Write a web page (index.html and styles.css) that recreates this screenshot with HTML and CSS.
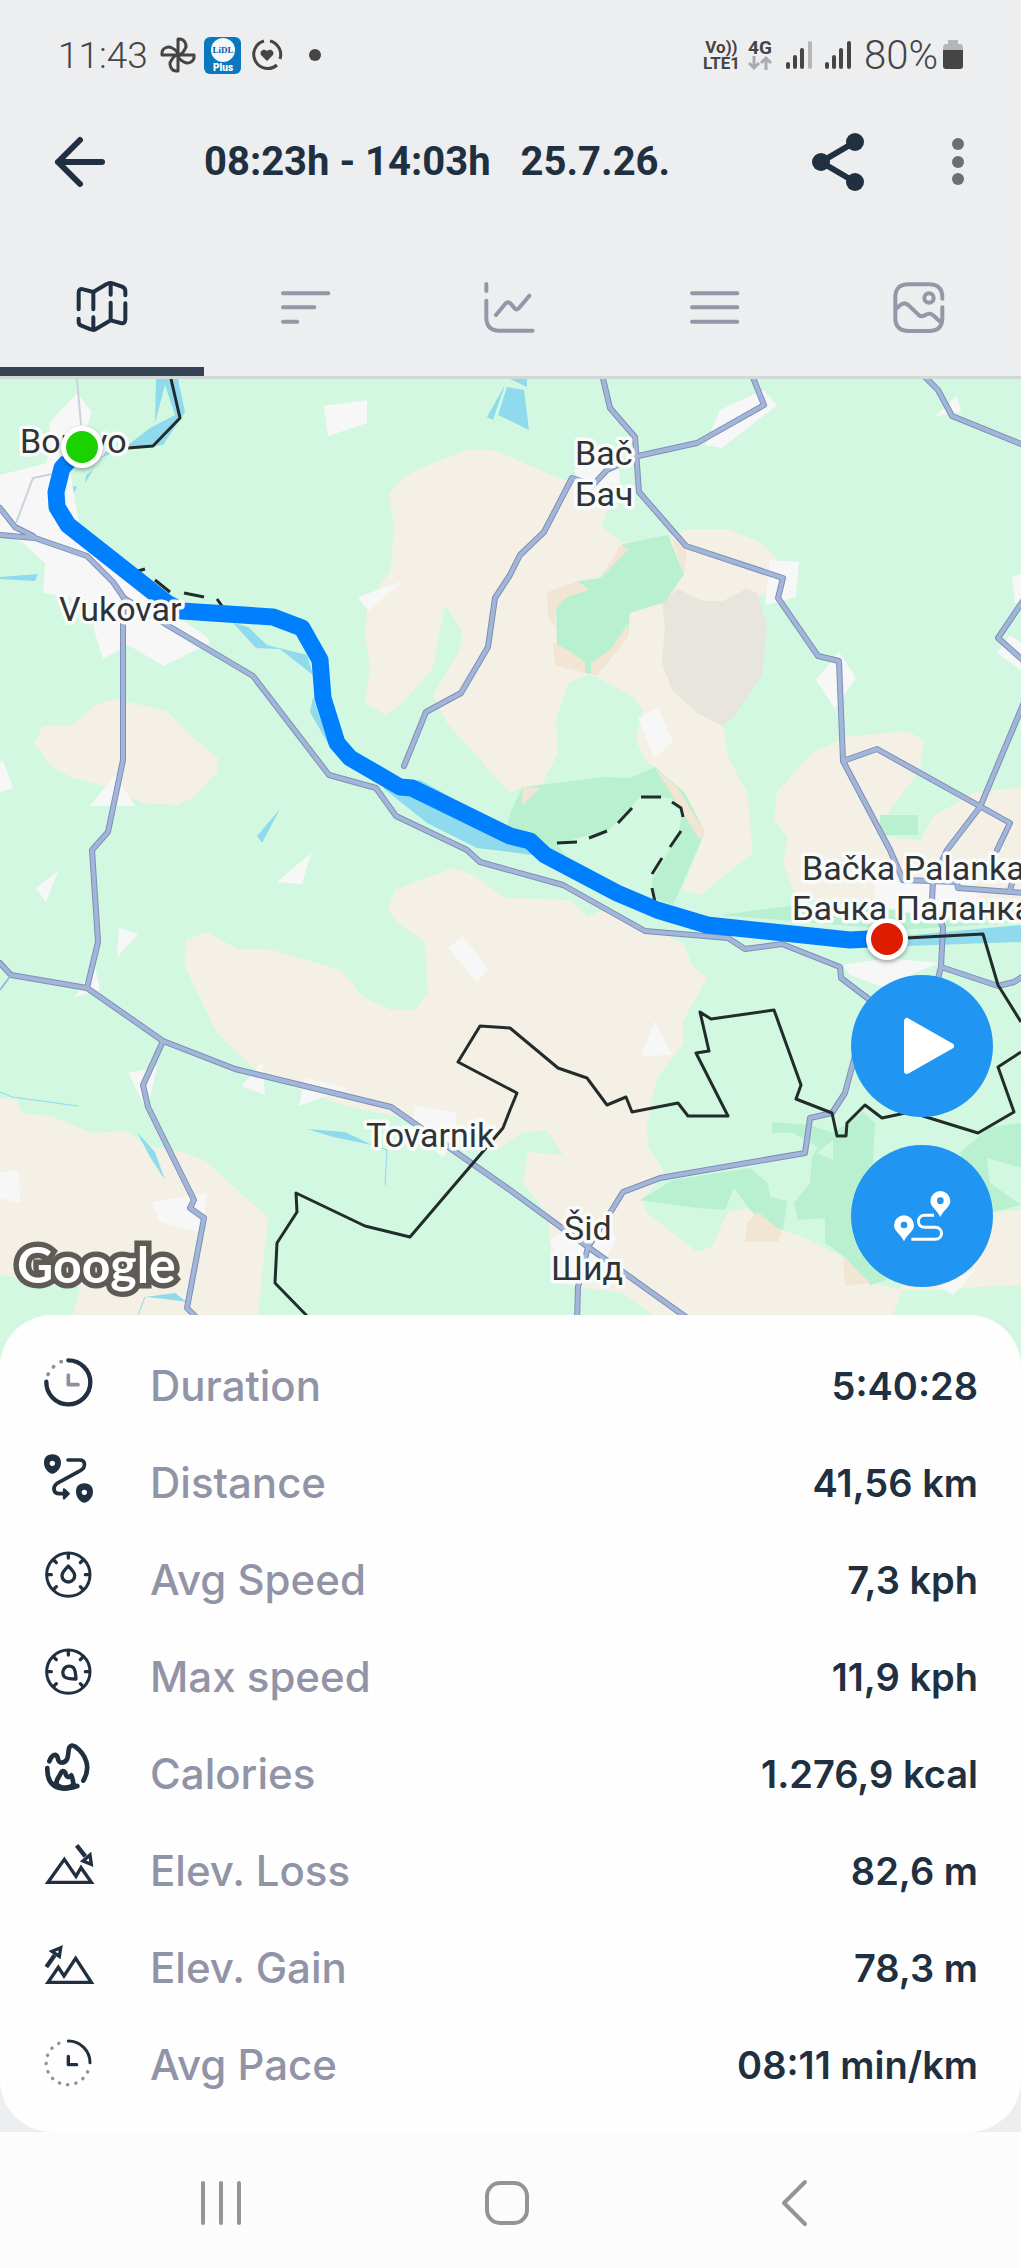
FILE: index.html
```html
<!DOCTYPE html>
<html lang="en">
    <head>
        <meta charset="utf-8">
        <meta name="viewport" content="width=device-width, initial-scale=1">
        <title>Track details</title>
        <link rel="stylesheet" href="styles.css">
    </head>
    <body>
        <header>
            <div class="status">
                <span class="clock">11:43</span>
                <svg class="fan" width="36" height="36" viewBox="0 0 36 36">
                    <g fill="none" stroke="#454545" stroke-width="3" stroke-linejoin="round">
                        <path d="M18 18V2C26 1 27 10 25 12C23 16 20 18 18 18Z"/>
                        <path d="M18 18H34C35 26 27 27 24 25C20 23 18 20 18 18Z"/>
                        <path d="M18 18V34C10 35 9 26 11 24C13 20 16 18 18 18Z"/>
                        <path d="M18 18H2C1 10 9 9 12 11C16 13 18 16 18 18Z"/>
                    </g>
                </svg>
                <svg width="37" height="37" viewBox="0 0 37 37">
                    <rect width="37" height="37" rx="6" fill="#0a78bf"/>
                    <circle cx="19" cy="13" r="12" fill="#f4f8fa"/>
                    <text class="lidl" x="19" y="16" fill="#0a5c9c">LiDL</text>
                    <text class="plus" x="19" y="34" fill="#fff">Plus</text>
                </svg>
                <svg class="ring" width="32" height="32" viewBox="0 0 32 32">
                    <g fill="none" stroke="#454545" stroke-width="3">
                        <path d="M13 2A14 14 0 1 0 26 26"/>
                        <path d="M19 2A14 14 0 0 1 29 20"/>
                    </g>
                    <path d="M16 22L10 16C8 12 13 9 16 12C19 9 24 12 22 16Z" fill="#454545"/>
                </svg>
                <span class="dot"></span>
                <span class="space"></span>
                <span class="lte"><b>Vo))</b><b>LTE1</b></span>
                <span class="net">
                    <b>4G</b>
                    <svg width="24" height="14" viewBox="0 0 24 14" fill="none" stroke="#a9abac" stroke-width="3">
                        <path d="M6 0V12M1 7L6 12L11 7M18 14V2M13 7L18 2L23 7"/>
                    </svg>
                </span>
                <svg class="signal" width="26" height="28" viewBox="0 0 26 28" stroke="#454545" stroke-width="4" stroke-linecap="round">
                    <path d="M2 23V26M9 16V26M16 9V26"/>
                    <path d="M24 2V26" stroke="#b4b6b7"/>
                </svg>
                <svg class="signal" width="26" height="28" viewBox="0 0 26 28" stroke="#454545" stroke-width="4" stroke-linecap="round">
                    <path d="M2 23V26M9 16V26M16 9V26M24 2V26"/>
                </svg>
                <span class="battery">80%</span>
                <svg width="20" height="30" viewBox="0 0 20 30">
                    <path d="M5 0H15V4H17Q20 4 20 8V12H0V8Q0 4 3 4H5Z" fill="#b4b6b7"/>
                    <path d="M0 10H20V26Q20 29 17 29H3Q0 29 0 26Z" fill="#454545"/>
                </svg>
            </div>

            <div class="titleBar">
                <button class="iconButton" aria-label="Back">
                    <svg width="52" height="52" viewBox="0 0 52 52" fill="none" stroke="#203040" stroke-width="6" stroke-linecap="round" stroke-linejoin="round">
                        <path d="M26 4L4 26L26 48M4 26H48"/>
                    </svg>
                </button>
                <h1><span>08:23h - 14:03h</span><span>25.7.26.</span></h1>
                <button class="iconButton" aria-label="Share">
                    <svg width="52" height="58" viewBox="0 0 52 58" fill="#203040">
                        <path d="M43 9L9 29L43 49" fill="none" stroke="#203040" stroke-width="6"/>
                        <circle cx="43" cy="9" r="9"/>
                        <circle cx="9" cy="29" r="9"/>
                        <circle cx="43" cy="49" r="9"/>
                    </svg>
                </button>
                <button class="iconButton more" aria-label="More">
                    <svg width="12" height="48" viewBox="0 0 12 48" fill="#6d6e70">
                        <circle cx="6" cy="6" r="6"/>
                        <circle cx="6" cy="24" r="6"/>
                        <circle cx="6" cy="41" r="6"/>
                    </svg>
                </button>
            </div>

            <nav class="tabs">
                <button class="tab active" aria-label="Map">
                    <svg width="52" height="52" viewBox="0 0 156 156">
                        <path d="M8 82V32C8 22 14 20 22 22L52 30L92 6Q104 1 112 5L138 14Q148 18 148 28V40M52 32V82M104 6V38M104 62V114M8 110V120Q8 128 16 131L44 142Q52 146 60 141L104 115L134 123Q148 126 148 112V64M52 106V142"/>
                    </svg>
                </button>
                <button class="tab" aria-label="Splits">
                    <svg width="52" height="52" viewBox="0 0 156 156">
                        <path d="M9 34H145M9 76H103M9 119H52"/>
                    </svg>
                </button>
                <button class="tab" aria-label="Charts">
                    <svg width="52" height="52" viewBox="0 0 156 156">
                        <path d="M7 6V27M7 56V108Q8 146 46 146H146M36 99L64 65Q72 57 80 65L92 79Q98 86 105 78L136 41"/>
                    </svg>
                </button>
                <button class="tab" aria-label="Laps">
                    <svg width="52" height="52" viewBox="0 0 156 156">
                        <path d="M9 34H145M9 76H145M9 119H145"/>
                    </svg>
                </button>
                <button class="tab" aria-label="Photos">
                    <svg width="52" height="52" viewBox="0 0 156 156">
                        <path d="M148 50Q150 6 106 7H48Q7 6 7 46V108Q7 147 48 147H108Q148 147 148 108V76M10 80L22 69Q36 58 48 71L76 98Q84 107 97 99Q110 91 122 101L142 119"/>
                        <circle cx="108" cy="48" r="14"/>
                    </svg>
                </button>
            </nav>
        </header>

        <main>
            <div class="map">
                <svg class="mapCanvas" viewBox="0 379 1021 988">
                    <rect y="379" width="1021" height="988" fill="#d2f8e2"/>

                    <!-- fields -->
                    <g fill="#f5f0e5">
                        <path d="M510 457L493 450L467 450L433 463L407 475L389 492L394 527L391 570L377 590L367 610L365 637L370 667L365 703L386 715L403 702L432 670L445 605L462 630L460 650L433 695L447 723L510 793L523 787L540 788L558 753L556 720L568 683L587 675L597 677L633 697L643 710L636 740L645 760L655 767L685 793L705 832L682 890L700 895L753 853L747 792L728 758L725 733L722 726L757 640L757 597L767 593L777 560L762 543L727 529L687 529L670 537L623 543L602 527L607 510L618 480L563 480Z"/>
                        <path d="M847 737L907 731L924 740L920 770L888 813L875 835L920 841L933 817L973 793L1021 787V900H797L783 863L788 837L774 820L777 792L812 753Z"/>
                        <path d="M43 726L72 726L95 705L115 699L167 711L192 737L218 758L217 772L193 798L177 805L143 803L107 787L70 777L50 765L34 743Z"/>
                        <path d="M207 932L237 949L272 950L340 970L365 998L390 1010L415 1010L428 993L425 942L397 922L388 910L395 890L453 868L473 875L505 898L570 900L588 917L603 910L683 943L693 967L707 978L682 1023L684 1043L657 1078L647 1123L648 1147L665 1173L642 1200L647 1213L697 1252L712 1247L727 1213L747 1208L767 1225L803 1237L843 1257L870 1283L902 1290L893 1315H653L623 1293L580 1287L552 1280L550 1237L547 1213L523 1183L528 1152L563 1155L547 1130L523 1132L497 1150L400 1117L350 1107L300 1090L253 1067L217 1033L185 967L186 940Z"/>
                        <path d="M0 1098L17 1100L22 1113L50 1116L93 1133L127 1131L145 1145L182 1152L207 1162L268 1218L258 1315H73L80 1287L0 1275Z"/>
                        <path d="M930 1200L993 1212L1021 1210V1285L977 1287L943 1290L900 1290Z"/>
                    </g>
                    <path fill="#e8e4de" d="M678 589L703 601L723 601L746 589L757 593L767 625L762 675L733 718L722 726L697 713L672 690L662 663L665 627L662 603Z"/>

                    <!-- forests -->
                    <g fill="#b8f0d0">
                        <path d="M623 544L668 535L684 574L665 602L630 613L628 637L597 675L585 673L557 647L556 607L548 600L578 581L600 578Z"/>
                        <path d="M510 813L523 787L603 777L630 778L655 767L685 793L705 832L673 905L540 860L505 835Z"/>
                        <path d="M880 815H918V835H880Z"/>
                        <path d="M720 915L790 906L885 910L1021 912V922L900 930Z"/>
                        <path d="M640 1200L673 1180L750 1168L768 1183L770 1197L787 1201L783 1230L767 1225L750 1210L734 1188L725 1210L697 1208Z"/>
                        <path d="M772 1122L810 1125L833 1133L863 1112L875 1123L873 1157L887 1280L870 1285L843 1255L825 1243V1218L798 1220L794 1203L810 1183L812 1157L818 1147L793 1133H772Z"/>
                        <path d="M978 1137L990 1127L1021 1123V1168L987 1158L990 1183L1021 1205L993 1212L973 1183L960 1153Z"/>
                    </g>
                    <g fill="#d2f8e2">
                        <path d="M557 844L610 829L640 797L672 798L683 810L678 835L665 858L652 880L654 900L620 890L570 862Z"/>
                        <path d="M833 1140V1160L817 1153Z"/>
                    </g>
                    <g fill="#f3e5d4">
                        <path d="M620 545L629 549L601 578ZM672 538L687 552L684 574ZM547 592L578 581L589 590L567 597L556 608L555 627L548 617ZM553 643L568 650L585 662V673L555 665ZM628 623V637L597 675H591V663L610 650Z"/>
                        <path d="M655 768L677 787L705 832L700 840L677 803ZM523 787L540 788L522 805ZM747 1223L758 1212L782 1232L778 1242H745ZM843 1257L870 1283L845 1286Z"/>
                    </g>

                    <!-- water -->
                    <g fill="#90daee">
                        <path d="M880 938L1021 925V942L880 947Z"/>
                        <path d="M156 379H178L185 412L163 445L128 448L100 458L105 452L128 445L150 428L175 415L165 385L155 423Z"/>
                        <path d="M68 485L77 487L65 510ZM93 470L85 483L86 475ZM0 577L38 574L35 581L0 579Z"/>
                        <path d="M233 623L248 627L267 645L307 655L313 675L280 649L256 648ZM313 697L330 747L310 712ZM122 583L155 603L140 600Z"/>
                        <path d="M383 788L420 780L510 830L545 845L540 856L510 852L477 848L427 823Z"/>
                        <path d="M280 809L262 843L257 836Z"/>
                        <path d="M505 385L493 420L487 417ZM507 387L524 390L529 430L498 415ZM510 379H527V387Z"/>
                        <path d="M137 1132L155 1152L165 1180L150 1157ZM307 1129L345 1132L372 1145L333 1137ZM145 1297L175 1293L187 1302L165 1299Z"/>
                    </g>
                    <path d="M145 1297L138 1315M0 1092L12 1097L78 1106M372 1145L387 1150L385 1185" fill="none" stroke="#90daee" stroke-width="1"/>

                    <!-- towns -->
                    <g fill="#f7f7f7">
                        <path d="M77 393L92 412L82 440L70 470L75 500L80 530L125 575L150 600L185 622L207 637L210 643L164 666L128 645L103 659L95 633L88 600L43 593L45 563L22 542L0 532V475L47 463L50 422Z"/>
                        <path d="M324 406L367 400V423L328 436ZM358 597L403 581L368 611ZM3 760L13 788L0 792V762ZM115 775L135 806H90Z"/>
                        <path d="M763 390L777 405L722 448L705 445L720 410ZM957 395L961 412L936 416ZM770 560L799 562L796 597L765 605ZM839 652L856 678L835 709L816 680ZM658 708L673 742L654 758L638 718Z"/>
                        <path d="M573 470L618 460L620 483L587 490ZM1012 577L1021 574V605L1015 603ZM1010 635L1021 643V670L997 653Z"/>
                        <path d="M58 871L46 902L36 888ZM311 853L302 884L277 882ZM119 928L138 934L117 957ZM95 965L100 990L75 997ZM463 936L488 969L477 982L448 948Z"/>
                        <path d="M157 1067L128 1073L147 1110ZM262 1062L265 1095L242 1086ZM305 1078L347 1088L299 1106ZM415 1105L456 1113L455 1143L443 1157L410 1130ZM0 1172L18 1170L21 1203L0 1198ZM152 1202L207 1193L202 1233L160 1222Z"/>
                        <path d="M655 1021L672 1055L641 1056ZM843 965L887 958L938 963L883 987L850 975ZM875 882L970 880L980 900L940 920L875 905ZM550 1240L583 1223L618 1237L603 1263L555 1253ZM940 1287L953 1295L978 1268Z"/>
                    </g>

                    <!-- roads: dark casing first, lighter fill on top -->
                    <path d="M77 379L81 425M52 474L33 478L16 523" fill="none" stroke="#c9d3de" stroke-width="2"/>
                    <defs>
                        <g id="roads" fill="none" stroke-linejoin="round" stroke-linecap="round">
                            <path d="M0 508L15 527L33 536M0 535L35 538L87 556L98 567L113 582L124 598L123 623V760L108 832L92 850L98 942L87 988"/>
                            <path d="M124 598L167 625L253 676L329 775L376 788L396 816L467 850L480 862L563 885L645 931L728 938L745 949L782 944L840 967L841 978L870 1000L862 1030L845 1093L832 1113L810 1118L805 1153L660 1178L623 1192L610 1213L588 1247"/>
                            <path d="M0 963L11 975L87 988L163 1041L235 1069L391 1107L510 1190L588 1247L690 1320M588 1247L578 1287L577 1320"/>
                            <path d="M163 1041L143 1085L148 1107L194 1200L190 1208L204 1218L187 1308L199 1320"/>
                            <path d="M601 370L610 408L635 437L639 492L686 546L783 578L778 598L818 656L839 661L843 761L890 850L903 880"/>
                            <path d="M750 370L764 405L697 443L638 456L607 470L593 485L572 478L544 532L520 555L510 575L495 598L488 647L461 693L426 712L404 766"/>
                            <path d="M918 370L938 390L952 416L1021 444M1025 598L998 638L1025 662"/>
                            <path d="M843 761L877 749L1010 823L997 850M1013 880L1010 890M1025 700L980 807L947 850L933 880L932 900L943 927L941 967L935 990"/>
                            <path d="M903 880L957 882L958 888L1025 893M941 967L998 986L1014 982L1025 975"/>
                        </g>
                    </defs>
                    <use href="#roads" stroke="#7b8fb9" stroke-width="6"/>
                    <use href="#roads" stroke="#a4b6d8" stroke-width="4"/>
                    <path d="M11 975L0 990" stroke="#a4b6d8" stroke-width="2"/>

                    <!-- country borders -->
                    <g fill="none" stroke="#222c2a" stroke-width="3" stroke-linejoin="round">
                        <path d="M171 379L180 418L153 446L128 448"/>
                        <path d="M309 1318L275 1283L277 1243L297 1212L296 1193L365 1226L410 1237L503 1128L510 1110L517 1093L458 1062L480 1026L510 1028L558 1068L587 1078L607 1105L626 1097L632 1112L678 1103L688 1116H728L696 1053L709 1051L700 1012L711 1019L774 1010L801 1085L796 1099L832 1113L837 1136H846L847 1123L865 1105L882 1118L910 1112L978 1133L1014 1112L998 1067L1021 1052"/>
                        <path d="M887 939L983 934L998 985L1021 1022"/>
                        <path d="M138 571L145 569M155 580L170 592M184 593L204 597M217 599L222 606M557 843L577 842M589 838L607 831M618 823L632 808M641 797H661M672 802L681 808L683 817M681 831L670 847M662 858L652 874M652 888L655 902"/>
                    </g>

                    <!-- recorded track -->
                    <path d="M81 447L62 468L56 492L57 507L68 525L167 603L182 611L273 617L302 628L320 660L323 698L337 743L350 758L400 787L412 788L510 836L530 841L545 855L617 893L657 910L707 925L850 940L887 938" fill="none" stroke="#0080ff" stroke-width="17" stroke-linejoin="round"/>

                    <g class="place">
                        <text x="20" y="453">Borovo</text>
                        <text x="59" y="621">Vukovar</text>
                        <text x="366" y="1147">Tovarnik</text>
                        <text x="575" y="465">Bač</text>
                        <text x="575" y="506">Бач</text>
                        <text x="802" y="880">Bačka Palanka</text>
                        <text x="792" y="920">Бачка Паланка</text>
                        <text x="564" y="1240">Šid</text>
                        <text x="551" y="1280">Шид</text>
                    </g>
                    <text class="google" x="17" y="1283">Google</text>

                    <g class="pin">
                        <circle cx="82" cy="447" r="21" fill="#fff"/>
                        <circle cx="82" cy="447" r="16" fill="#1bd100"/>
                        <circle cx="887" cy="939" r="21" fill="#fff"/>
                        <circle cx="887" cy="939" r="16" fill="#de1c00"/>
                    </g>
                </svg>

                <div class="mapActions">
                    <button class="round" aria-label="Play track">
                        <svg width="52" height="58" viewBox="0 0 52 58">
                            <path d="M4 4V54L48 29Z" fill="#fff" stroke="#fff" stroke-width="6" stroke-linejoin="round"/>
                        </svg>
                    </button>
                    <button class="round" aria-label="Show route">
                        <svg width="58" height="52" viewBox="0 0 174 156">
                            <g fill="#fff" fill-rule="evenodd">
                                <path d="M142 81C132 60 112 50 112 33A30 30 0 0 1 172 33C172 50 152 60 142 81ZM142 22A10 10 0 1 0 142 42A10 10 0 1 0 142 22Z"/>
                                <path d="M33 154C23 133 3 123 3 106A30 30 0 0 1 63 106C63 123 43 133 33 154ZM33 95A10 10 0 1 0 33 115A10 10 0 1 0 33 95Z"/>
                            </g>
                            <path d="M123 76H95C70 76 70 112 95 112H126C152 112 152 148 126 148H55" fill="none" stroke="#fff" stroke-width="9"/>
                        </svg>
                    </button>
                </div>
            </div>

            <dl class="stats">
                <div class="row">
                    <dt>
                        <svg viewBox="0 0 156 156">
                            <path d="M79 1A66 66 0 1 1 13 65" stroke-width="13"/>
                            <path d="M57 5L58 5M34 21L35 20M18 43L19 42" stroke="#8d929a" stroke-width="11"/>
                            <path d="M79 45V74H108" stroke="#8d929a" stroke-width="11"/>
                        </svg>
                        Duration
                    </dt>
                    <dd>5:40:28</dd>
                </div>
                <div class="row">
                    <dt>
                        <svg viewBox="0 0 156 156">
                            <g fill="#203040" fill-rule="evenodd" stroke="none">
                                <path d="M31 -8C13 -8 6 4 6 18C6 34 20 50 31 50C42 50 57 34 57 18C57 4 49 -8 31 -8ZM31 11A8 8 0 1 0 31 27A8 8 0 1 0 31 11Z"/>
                                <path d="M127 79C109 79 102 91 102 105C102 121 116 137 127 137C138 137 153 121 153 105C153 91 145 79 127 79ZM127 98A8 8 0 1 0 127 114A8 8 0 1 0 127 98Z"/>
                            </g>
                            <path d="M78 9H112C132 9 132 31 115 41L45 79C30 91 34 110 52 110H70" stroke-width="11"/>
                            <path d="M66 97L80 110L66 124Z" fill="#203040" stroke-width="7"/>
                        </svg>
                        Distance
                    </dt>
                    <dd>41,56 km</dd>
                </div>
                <div class="row">
                    <dt>
                        <svg viewBox="0 0 156 156">
                            <circle cx="79" cy="62" r="65" stroke-width="9"/>
                            <path d="M79 0V12M79 36C72 44 60 54 60 65A19 19 0 0 0 98 65C98 54 86 44 79 36ZM16 62H28M130 62H142M35 18L43 26M123 18L115 26M35 106L43 98M123 106L115 98" stroke-width="10"/>
                        </svg>
                        Avg Speed
                    </dt>
                    <dd>7,3 kph</dd>
                </div>
                <div class="row">
                    <dt>
                        <svg viewBox="0 0 156 156">
                            <circle cx="79" cy="62" r="65" stroke-width="9"/>
                            <path d="M79 0V12M102 84C101 76 101 58 95 51A19 19 0 0 0 68 78C76 84 94 84 102 84ZM16 62H28M130 62H142M35 18L43 26M123 18L115 26M35 106L43 98M123 106L115 98" stroke-width="10"/>
                        </svg>
                        Max speed
                    </dt>
                    <dd>11,9 kph</dd>
                </div>
                <div class="row">
                    <dt>
                        <svg viewBox="0 0 156 156">
                            <path d="M22 40C28 22 42 14 46 26C50 42 52 44 60 44C84 40 76 12 82 -2Q88 -12 100 -4C132 20 148 58 124 98" stroke-width="14"/>
                            <path d="M16 60C14 112 48 136 106 114" stroke-width="14"/>
                            <path d="M44 106C42 92 52 88 56 76Q62 64 70 74C72 88 80 90 88 82Q94 96 94 110" stroke-width="14"/>
                            <path d="M38 108L56 118Q76 124 96 112" stroke-width="16"/>
                        </svg>
                        Calories
                    </dt>
                    <dd>1.276,9 kcal</dd>
                </div>
                <div class="row">
                    <dt>
                        <svg viewBox="0 0 156 156">
                            <path class="sharp" d="M18 112L67 43L102 94L117 68L148 112ZM144 30L148 58L123 48Z" stroke-width="10"/>
                            <path class="sharp" d="M104 1L130 34" stroke-width="13"/>
                        </svg>
                        Elev. Loss
                    </dt>
                    <dd>82,6 m</dd>
                </div>
                <div class="row">
                    <dt>
                        <svg viewBox="0 0 156 156">
                            <path class="sharp" d="M18 121L49 76L66 102L101 49L148 121ZM56 17L30 28L52 43Z" stroke-width="10"/>
                            <path class="sharp" d="M13 75L38 40" stroke-width="13"/>
                        </svg>
                        Elev. Gain
                    </dt>
                    <dd>78,3 m</dd>
                </div>
                <div class="row">
                    <dt>
                        <svg viewBox="0 0 156 156">
                            <path d="M79 6A65 65 0 0 1 144 71" stroke-width="9"/>
                            <path d="M137 98A65 65 0 1 1 58 10" stroke="#8d929a" stroke-width="10" stroke-dasharray="1 24"/>
                            <path d="M79 52V77H104" stroke-width="10"/>
                        </svg>
                        Avg Pace
                    </dt>
                    <dd>08:11 min/km</dd>
                </div>
            </dl>
        </main>

        <nav class="systemNav">
            <button class="iconButton" aria-label="Recent apps">
                <svg width="44" height="46" viewBox="0 0 44 46"><path d="M4 3V43M22 3V43M40 3V43"/></svg>
            </button>
            <button class="iconButton" aria-label="Home">
                <svg width="46" height="46" viewBox="0 0 46 46"><rect x="3" y="3" width="40" height="40" rx="13"/></svg>
            </button>
            <button class="iconButton" aria-label="Go back">
                <svg width="28" height="48" viewBox="0 0 28 48"><path d="M25 3L4 24L25 45"/></svg>
            </button>
        </nav>
    </body>
</html>
```
FILE: styles.css
```css
* {
    box-sizing: border-box;
}
body {
    margin: 0;
    background-color: #edeef0;
    color: #203040;
    font-family: Roboto, Arial, sans-serif;
}
svg {
    display: block;
    flex: none;
    overflow: visible;
}
button {
    padding: 0;
    border: none;
    background: none;
    cursor: pointer;
}

/* phone status bar */
.status {
    display: flex;
    align-items: center;
    height: 110px;
    padding: 0 58px;
    color: #454545;
}
.clock, .battery {
    font-weight: 300;
}
.clock {
    font-size: 37px;
}
.battery {
    margin-right: 5px;
    font-size: 40px;
}
.fan {
    margin: 0 8px 0 12px;
}
.lidl, .plus {
    font-weight: 900;
    text-anchor: middle;
}
.lidl {
    font-family: "Liberation Serif", serif;
    font-size: 9px;
}
.plus {
    font-size: 10px;
}
.ring {
    margin-left: 10px;
}
.dot {
    width: 12px;
    height: 12px;
    margin-left: 26px;
    border-radius: 50%;
    background-color: #454545;
}
.space {
    flex: 1;
}
.lte, .net {
    display: flex;
    flex-direction: column;
    align-items: center;
    font-size: 17px;
    line-height: 16px;
}
.net {
    margin: 0 14px 0 8px;
    font-size: 19px;
}
.signal {
    margin-right: 13px;
}

/* title bar */
.titleBar {
    display: flex;
    align-items: center;
    height: 103px;
    padding: 0 57px 0 54px;
}
.iconButton {
    display: flex;
    align-items: center;
    justify-content: center;
}
.titleBar h1 {
    display: flex;
    flex: 1;
    gap: 30px;
    margin: 0 0 0 98px;
    font-size: 40px;
    font-weight: 700;
    white-space: nowrap;
}
.more {
    margin-left: 88px;
}

/* tabs */
.tabs {
    display: grid;
    grid-template-columns: repeat(5, 1fr);
    padding-top: 27px;
    border-bottom: 3px solid #d0d9d5;
}
.tab {
    display: flex;
    align-items: center;
    justify-content: center;
    height: 136px;
    border-bottom: 9px solid transparent;
    border-top: 9px solid transparent;
}
.tab svg {
    fill: none;
    stroke: #9497a8;
    stroke-width: 12px;
    stroke-linecap: round;
    stroke-linejoin: round;
}
.tab.active {
    border-bottom-color: #354354;
}
.tab.active svg {
    stroke: #203040;
}

/* map */
.map {
    position: relative;
}
.mapCanvas {
    width: 100%;
    height: auto;
    overflow: hidden;
}
.place {
    font-size: 34px;
    fill: #303336;
    stroke: #f9fbfa;
    stroke-width: 7px;
    stroke-linejoin: round;
    paint-order: stroke;
}
.google {
    font-family: Lato, sans-serif;
    font-size: 50px;
    font-weight: 700;
    fill: #fff;
    stroke: #5e5b57;
    stroke-width: 11px;
    paint-order: stroke;
}
.pin {
    filter: drop-shadow(0 2px 2px rgba(0, 0, 0, 0.35));
}
.mapActions {
    position: absolute;
    right: 28px;
    bottom: 80px;
    display: flex;
    flex-direction: column;
    gap: 28px;
}
.round {
    display: flex;
    align-items: center;
    justify-content: center;
    width: 142px;
    height: 142px;
    border-radius: 50%;
    background-color: #2095f2;
}
.round:first-child {
    padding-left: 14px;
}

/* statistics */
.stats {
    position: relative;
    margin: -52px 0 0;
    padding: 22px 43px 19px 42px;
    border-radius: 52px;
    background-color: #fefefe;
}
.row {
    display: flex;
    align-items: center;
    justify-content: space-between;
    height: 97px;
    font-family: Inter, sans-serif;
}
dt {
    display: flex;
    align-items: center;
    gap: 56px;
    color: #9194a6;
    font-size: 42px;
    font-weight: 500;
}
dt svg {
    width: 52px;
    height: 52px;
    fill: none;
    stroke: #203040;
    stroke-linecap: round;
    stroke-linejoin: round;
}
.sharp {
    stroke-linecap: butt;
    stroke-linejoin: miter;
}
dd {
    margin: 0;
    font-size: 38px;
    font-weight: 600;
}

/* phone navigation buttons */
.systemNav {
    display: grid;
    grid-template-columns: repeat(3, 1fr);
    height: 136px;
    padding: 6px 84px 0 78px;
    background-color: #fcfcfc;
}
.systemNav svg {
    fill: none;
    stroke: #949494;
    stroke-width: 4px;
    stroke-linecap: round;
    stroke-linejoin: round;
}
```
